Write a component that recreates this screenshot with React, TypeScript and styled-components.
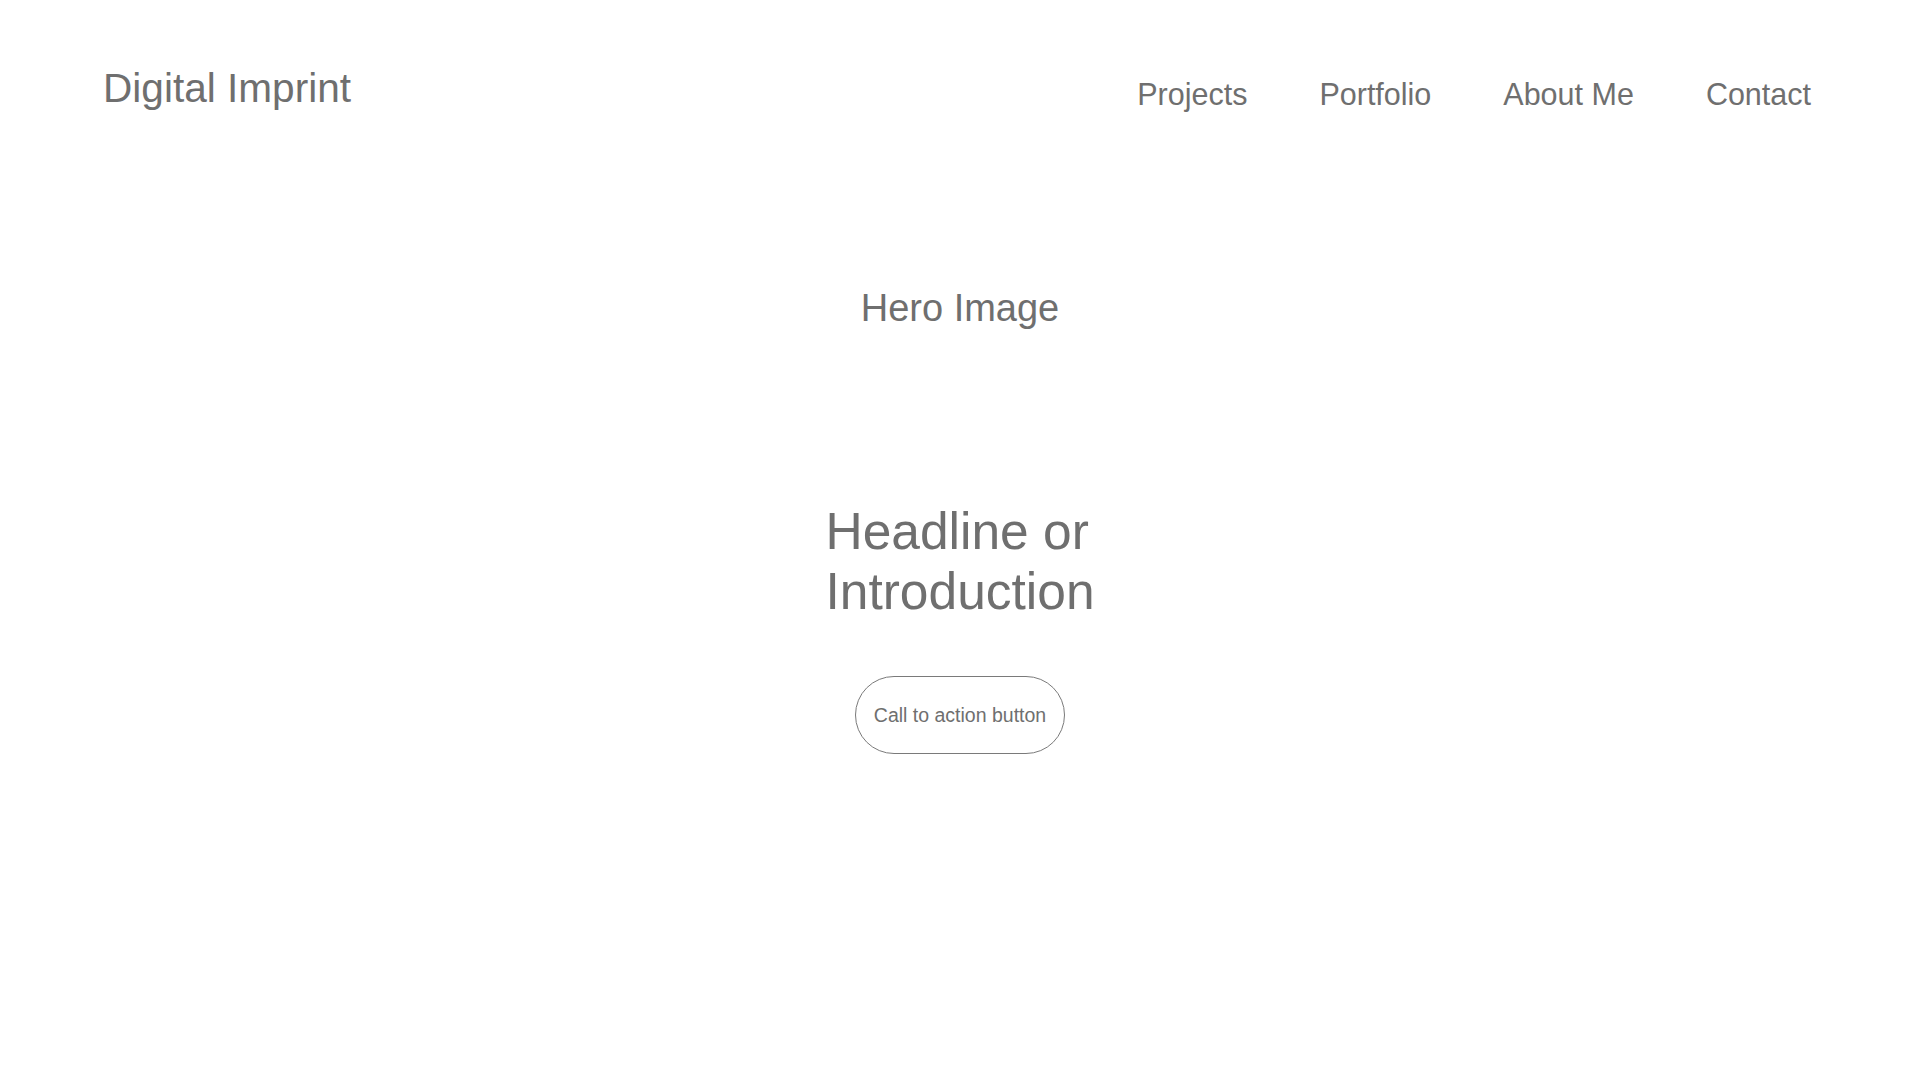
import React from "react";
import styled, { createGlobalStyle } from "styled-components";

const GlobalStyle = createGlobalStyle`
  html, body {
    margin: 0;
    padding: 0;
    background: #ffffff;
  }
  body {
    font-family: "Liberation Sans", Arial, Helvetica, sans-serif;
    color: #6f6f6f;
  }
  * { box-sizing: border-box; }
`;

const Page = styled.div`
  width: 1920px;
  min-height: 1080px;
  background: #ffffff;
  display: flex;
  flex-direction: column;
`;

const Header = styled.header`
  display: flex;
  justify-content: space-between;
  align-items: flex-start;
  padding: 65px 109px 0 103px;
`;

const Logo = styled.div`
  font-size: 40.6px;
  line-height: 46px;
  color: #6f6f6f;
  font-weight: 400;
`;

const Nav = styled.nav`
  display: flex;
  gap: 72px;
  margin-top: 12px;
`;

const NavLink = styled.a`
  font-size: 30.5px;
  line-height: 35px;
  color: #6f6f6f;
  text-decoration: none;
  cursor: pointer;
`;

const Main = styled.main`
  display: flex;
  flex-direction: column;
  align-items: center;
`;

const HeroImage = styled.div`
  width: 100%;
  display: flex;
  justify-content: center;
  padding-top: 174px;
  font-size: 38px;
  line-height: 44px;
  color: #6f6f6f;
`;

const Headline = styled.h1`
  margin: 171px 0 0;
  font-size: 51.5px;
  line-height: 60px;
  font-weight: 400;
  color: #6f6f6f;
  text-align: left;
`;

const CtaButton = styled.button`
  margin-top: 55px;
  height: 78px;
  padding: 0 18px;
  display: inline-flex;
  align-items: center;
  justify-content: center;
  border: 1px solid #7a7a7a;
  border-radius: 39px;
  background: #ffffff;
  font-family: "Liberation Sans", Arial, Helvetica, sans-serif;
  font-size: 19.5px;
  color: #6f6f6f;
  cursor: pointer;
`;

const navItems = ["Projects", "Portfolio", "About Me", "Contact"];

export default function App() {
  return (
    <>
      <GlobalStyle />
      <Page>
        <Header>
          <Logo>Digital Imprint</Logo>
          <Nav>
            {navItems.map((item) => (
              <NavLink key={item}>{item}</NavLink>
            ))}
          </Nav>
        </Header>
        <Main>
          <HeroImage>Hero Image</HeroImage>
          <Headline>
            Headline or
            <br />
            Introduction
          </Headline>
          <CtaButton>Call to action button</CtaButton>
        </Main>
      </Page>
    </>
  );
}
